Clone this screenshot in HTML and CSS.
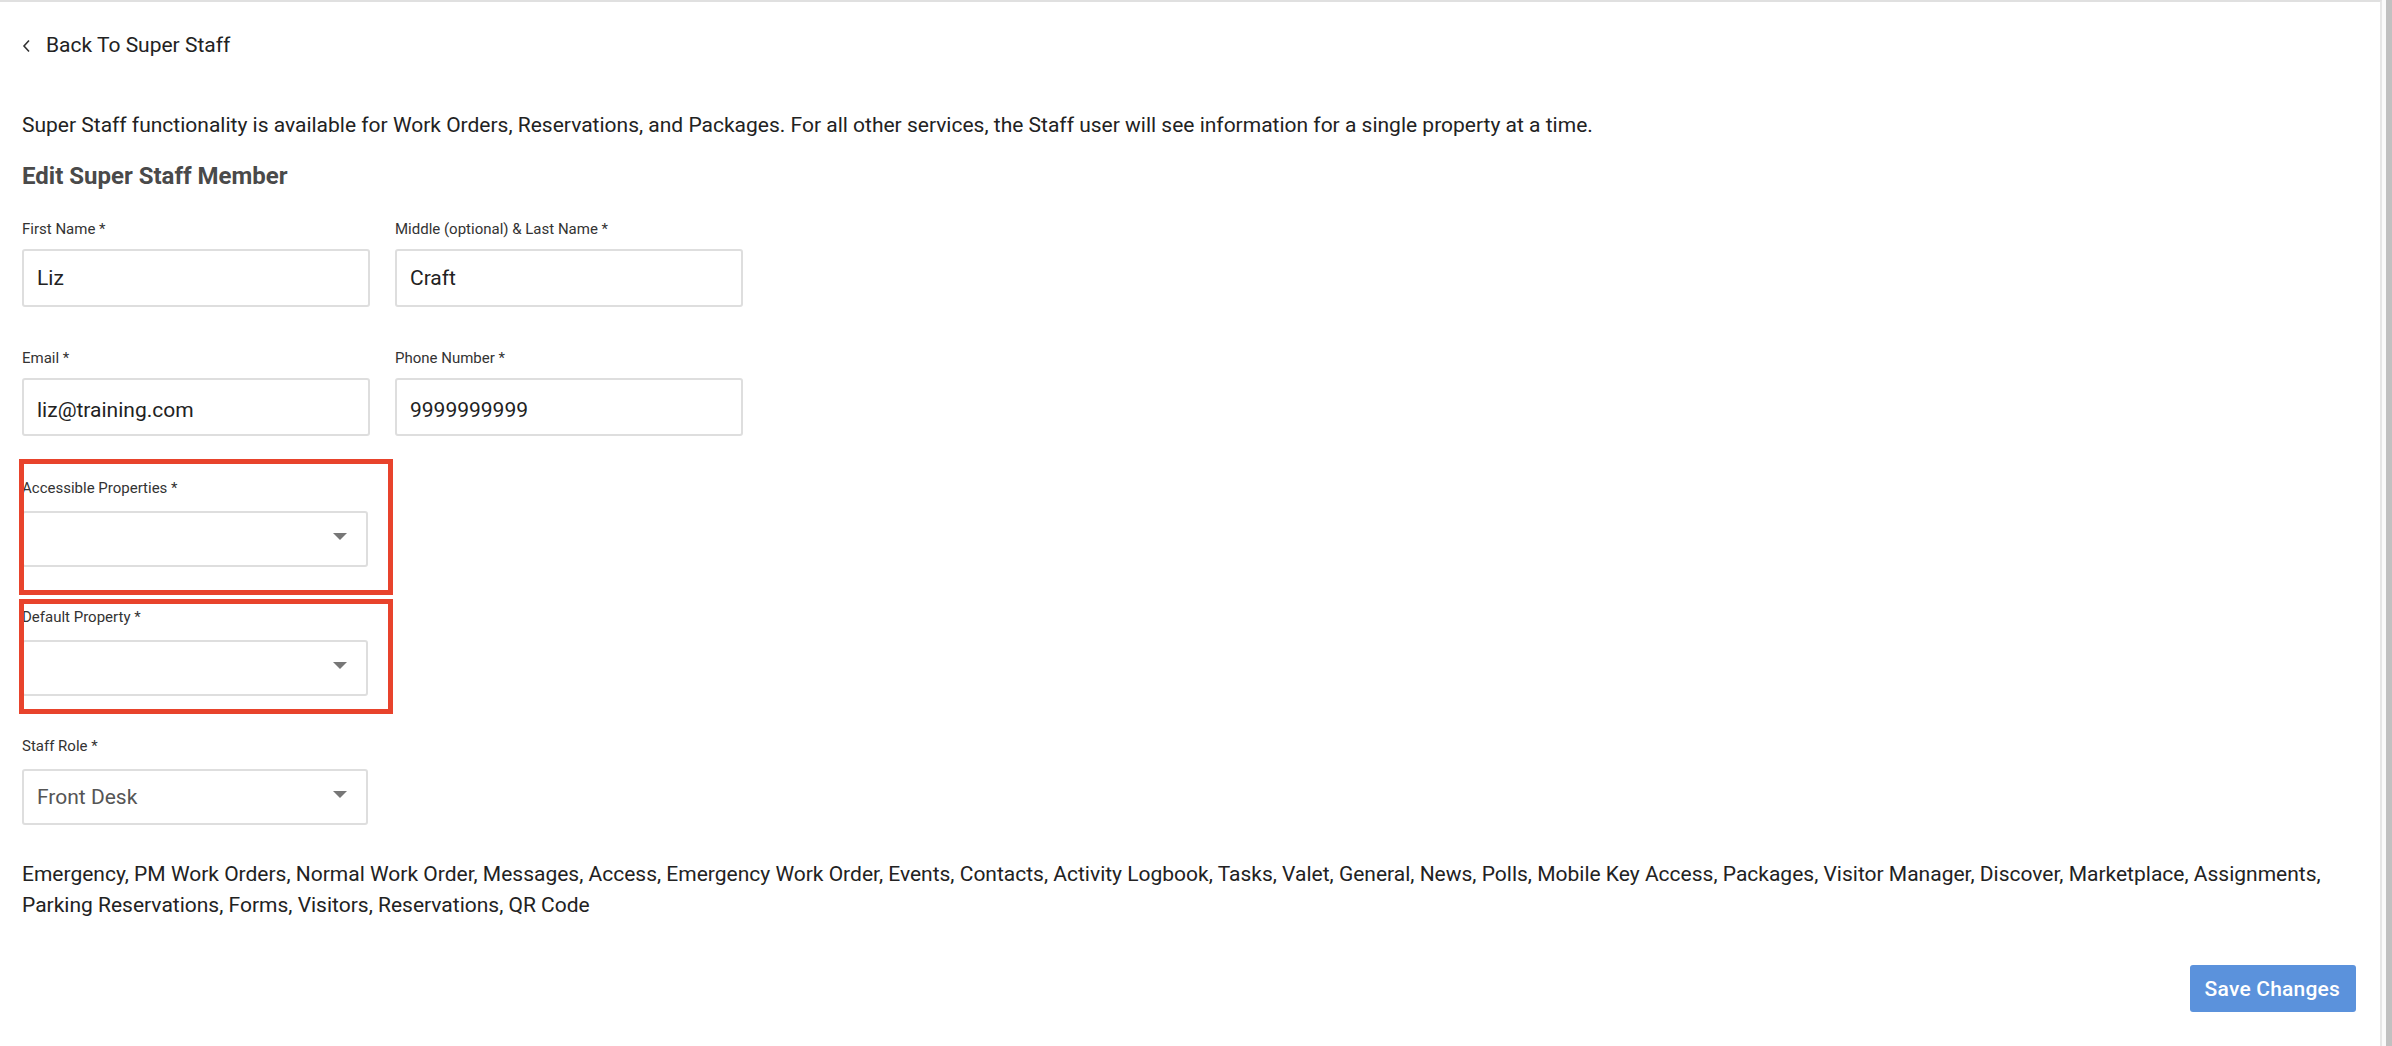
FILE: index.html
```html
<!DOCTYPE html>
<html lang="en">
<head>
<meta charset="utf-8">
<title>Edit Super Staff Member</title>
<link rel="stylesheet" href="styles.css">
</head>
<body>
<div class="page">
  <main class="main">
    <a class="back" href="#">
      <svg class="chev" width="10" height="14" viewBox="0 0 10 14"><polyline points="7,1.5 2,7 7,12.5" fill="none" stroke="#333" stroke-width="1.6"/></svg>
      <span>Back To Super Staff</span>
    </a>
    <p class="intro">Super Staff functionality is available for Work Orders, Reservations, and Packages. For all other services, the Staff user will see information for a single property at a time.</p>
    <h1 class="title">Edit Super Staff Member</h1>
    <div class="form">
      <div class="row">
        <div class="field">
          <label class="label">First Name *</label>
          <input class="input" type="text" value="Liz">
        </div>
        <div class="field">
          <label class="label">Middle (optional) &amp; Last Name *</label>
          <input class="input" type="text" value="Craft">
        </div>
      </div>
      <div class="row row-lower">
        <div class="field">
          <label class="label">Email *</label>
          <input class="input" type="text" value="liz@training.com">
        </div>
        <div class="field">
          <label class="label">Phone Number *</label>
          <input class="input" type="text" value="9999999999">
        </div>
      </div>
      <div class="field field-select">
        <div class="mark mark-1"></div>
        <label class="label">Accessible Properties *</label>
        <div class="select"><span class="value"></span><svg class="caret" width="14" height="7" viewBox="0 0 14 7"><polygon points="0,0 14,0 7,7" fill="#777"/></svg></div>
      </div>
      <div class="field field-select">
        <div class="mark mark-2"></div>
        <label class="label">Default Property *</label>
        <div class="select"><span class="value"></span><svg class="caret" width="14" height="7" viewBox="0 0 14 7"><polygon points="0,0 14,0 7,7" fill="#777"/></svg></div>
      </div>
      <div class="field field-select">
        <label class="label">Staff Role *</label>
        <div class="select"><span class="value">Front Desk</span><svg class="caret" width="14" height="7" viewBox="0 0 14 7"><polygon points="0,0 14,0 7,7" fill="#777"/></svg></div>
      </div>
    </div>
    <p class="services">Emergency, PM Work Orders, Normal Work Order, Messages, Access, Emergency Work Order, Events, Contacts, Activity Logbook, Tasks, Valet, General, News, Polls, Mobile Key Access, Packages, Visitor Manager, Discover, Marketplace, Assignments, Parking Reservations, Forms, Visitors, Reservations, QR Code</p>
    <div class="actions">
      <button class="save" type="button">Save Changes</button>
    </div>
  </main>
  <div class="scrollbar">
    <div class="track"></div>
    <div class="thumb"></div>
  </div>
</div>
</body>
</html>
```
FILE: styles.css
```css
html, body {
  margin: 0;
  padding: 0;
  background: #ffffff;
}
body {
  font-family: Roboto, "Liberation Sans", Arial, sans-serif;
  color: #222222;
}
.page {
  display: flex;
  height: 1046px;
  overflow: hidden;
}
.main {
  flex: 1;
  position: relative;
  border-top: 2px solid #e0e0e0;
  border-right: 2px solid #e6e6e6;
  padding: 28px 24px 0 22px;
  background: #ffffff;
}
.scrollbar {
  display: flex;
  width: 10px;
  flex: none;
}
.track {
  width: 4px;
  background: #fafafa;
}
.thumb {
  width: 6px;
  background: #c1c1c1;
}
.back {
  display: flex;
  align-items: center;
  height: 30px;
  text-decoration: none;
  color: #222222;
  font-size: 21px;
  line-height: 30px;
}
.chev {
  margin-left: 0;
  margin-right: 14px;
  margin-top: 1px;
}
.intro {
  margin: 50px 0 0 0;
  font-size: 21px;
  line-height: 30px;
  color: #222222;
}
.title {
  margin: 21px 0 0 0;
  font-size: 24px;
  line-height: 30px;
  font-weight: 700;
  color: #4a4a4a;
}
.form {
  margin-top: 28px;
  display: flex;
  flex-direction: column;
  gap: 40px;
}
.row {
  display: flex;
  gap: 25px;
}
.row + .row {
  margin-top: 1px;
}
.field {
  display: flex;
  flex-direction: column;
  width: 348px;
  position: relative;
}
.label {
  font-size: 15px;
  line-height: 20px;
  color: #333333;
  margin-bottom: 10px;
}
.input {
  box-sizing: border-box;
  height: 58px;
  width: 100%;
  margin: 0;
  border: 2px solid #dedede;
  border-radius: 3px;
  padding: 0 13px;
  font-family: Roboto, "Liberation Sans", Arial, sans-serif;
  font-size: 21px;
  color: #222222;
  background: #ffffff;
  outline: none;
}
.row-lower .input {
  padding-top: 5px;
}
.field-select {
  width: 346px;
}
.row + .field-select {
  margin-top: 2px;
}
.field-select .label {
  margin-bottom: 13px;
}
.select {
  box-sizing: border-box;
  height: 56px;
  border: 2px solid #dedede;
  border-radius: 3px;
  padding: 0 19px 0 13px;
  display: flex;
  align-items: center;
  justify-content: space-between;
  background: #ffffff;
}
.value {
  font-size: 21px;
  color: #555555;
}
.caret {
  margin-bottom: 6px;
}
.mark {
  position: absolute;
  border: 5px solid #e8432c;
  pointer-events: none;
  z-index: 2;
}
.mark-1 {
  top: -19px;
  left: -3px;
  right: -25px;
  bottom: -28px;
}
.mark-2 {
  top: -8px;
  left: -3px;
  right: -25px;
  bottom: -18px;
}
.services {
  margin: 34px 0 0 0;
  font-size: 21px;
  line-height: 31px;
  color: #222222;
}
.actions {
  margin-top: 44px;
  display: flex;
  justify-content: flex-end;
}
.save {
  height: 47px;
  padding: 0 16px 0 15px;
  border: none;
  border-radius: 3px;
  background: #5b92dc;
  color: #ffffff;
  font-family: Roboto, "Liberation Sans", Arial, sans-serif;
  font-size: 21px;
  font-weight: 500;
  letter-spacing: 0.2px;
}
```
